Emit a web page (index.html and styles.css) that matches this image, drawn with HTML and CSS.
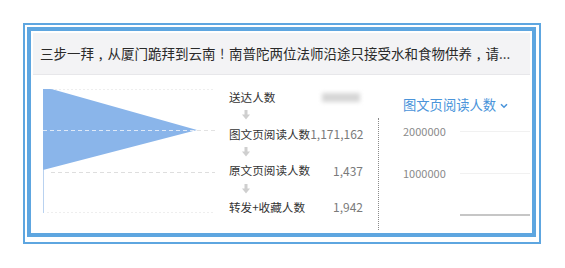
FILE: index.html
```html
<!DOCTYPE html>
<html lang="zh">
<head>
<meta charset="utf-8">
<link rel="stylesheet" href="styles.css">
</head>
<body>
<div class="page">
  <div class="outer">
    <div class="inner">
      <div class="header">三步一拜<span class="p">,</span>从厦门跪拜到云南<span class="p">!</span>南普陀两位法师沿途只接受水和食物供养<span class="p">,</span>请...</div>
      <div class="body">
        <svg class="funnel" width="172" height="156" viewBox="0 0 172 156">
          <line x1="0" y1="14.5" x2="172" y2="14.5" stroke="#eeeeee" stroke-width="1" stroke-dasharray="2 2"/>
          <path d="M0 14 L7 14 Q9 14 12 15 L154 55 L0 95 Z" fill="#8ab5ea"/>
          <line x1="0" y1="55.5" x2="154" y2="55.5" stroke="#dfe9f7" stroke-width="1" stroke-dasharray="4 3"/>
          <line x1="154" y1="55.5" x2="172" y2="55.5" stroke="#e2e2e2" stroke-width="1" stroke-dasharray="4 3"/>
          <line x1="8" y1="97.5" x2="172" y2="97.5" stroke="#dedede" stroke-width="1" stroke-dasharray="4 3"/>
          <line x1="0.5" y1="95" x2="0.5" y2="138" stroke="#b9d2f0" stroke-width="1"/>
          <line x1="4" y1="137.5" x2="172" y2="137.5" stroke="#eeeeee" stroke-width="1" stroke-dasharray="2 2"/>
        </svg>
        <div class="steps">
          <div class="step"><span class="name">送达人数</span><span class="blur"></span></div>
          <div class="arrow"><svg width="8" height="10" viewBox="0 0 8 10"><rect x="2.5" y="0" width="3" height="5" fill="#cfcfcf"/><path d="M0 4.5 L8 4.5 L4 9.5 Z" fill="#cfcfcf"/></svg></div>
          <div class="step"><span class="name">图文页阅读人数</span><span class="num">1,171,162</span></div>
          <div class="arrow"><svg width="8" height="10" viewBox="0 0 8 10"><rect x="2.5" y="0" width="3" height="5" fill="#cfcfcf"/><path d="M0 4.5 L8 4.5 L4 9.5 Z" fill="#cfcfcf"/></svg></div>
          <div class="step"><span class="name">原文页阅读人数</span><span class="num">1,437</span></div>
          <div class="arrow"><svg width="8" height="10" viewBox="0 0 8 10"><rect x="2.5" y="0" width="3" height="5" fill="#cfcfcf"/><path d="M0 4.5 L8 4.5 L4 9.5 Z" fill="#cfcfcf"/></svg></div>
          <div class="step"><span class="name">转发+收藏人数</span><span class="num">1,942</span></div>
        </div>
        <div class="divider"></div>
        <div class="chart">
          <div class="title">图文页阅读人数 <svg class="chev" width="8" height="6" viewBox="0 0 8 6"><path d="M1 1.2 L4 4.2 L7 1.2" fill="none" stroke="#4a94da" stroke-width="1.6"/></svg></div>
          <div class="row"><span class="tick">2000000</span><span class="grid"></span></div>
          <div class="row"><span class="tick">1000000</span><span class="grid"></span></div>
          <div class="row"><span class="tick"></span><span class="axis"></span></div>
        </div>
      </div>
    </div>
  </div>
</div>
</body>
</html>
```

FILE: styles.css
```css
* { box-sizing: border-box; }
html, body { margin: 0; padding: 0; background: #ffffff; }
body {
  font-family: "Noto Sans CJK SC", "Noto Sans", sans-serif;
  color: #333333;
}
.page { padding: 23px 0 0 23px; }
.outer {
  width: 518px;
  height: 221px;
  border: 2px solid #5ea6e0;
  padding: 2px 3px 5px 2px;
}
.inner {
  width: 509px;
  height: 210px;
  border: 4px solid #5ea6e0;
  padding: 2px;
  background: #ffffff;
}
.header {
  height: 42px;
  line-height: 41px;
  background: #f3f3f5;
  border-bottom: 1px solid #e7e7ea;
  padding-left: 7px;
  font-size: 13.5px;
  color: #2a2a2a;
  white-space: nowrap;
  overflow: hidden;
}
.p {
  display: inline-block;
  width: 1em;
  text-align: center;
}
.body {
  display: flex;
  height: 156px;
}
.funnel { margin-left: 10px; flex: none; display: block; }
.steps {
  margin-left: 14px;
  width: 134px;
  padding-top: 13px;
  font-size: 11.6px;
  flex: none;
}
.step {
  height: 18.3px;
  display: flex;
  align-items: center;
  justify-content: space-between;
  white-space: nowrap;
}
.name { color: #333333; }
.num { color: #7a7a7a; font-size: 12px; }
.blur {
  width: 38px;
  height: 9px;
  margin-right: 3px;
  background: #d6d6d6;
  filter: blur(2px);
}
.arrow {
  height: 18.3px;
  display: flex;
  align-items: center;
  padding-left: 13px;
}
.arrow svg { display: block; }
.divider {
  margin-left: 15px;
  margin-top: 43px;
  height: 112px;
  width: 0;
  border-left: 1px dotted #8a8a8a;
  flex: none;
}
.chart {
  margin-left: 24px;
  flex: 1;
  padding-top: 20px;
  display: flex;
  flex-direction: column;
}
.title {
  height: 20px;
  line-height: 20px;
  font-size: 13.3px;
  color: #4a94da;
  display: flex;
  align-items: center;
  white-space: nowrap;
}
.chev { margin-left: 4px; margin-top: 2px; }
.row {
  height: 20px;
  margin-top: 22px;
  display: flex;
  align-items: center;
}
.title + .row { margin-top: 6px; }
.tick {
  width: 57px;
  font-size: 11px;
  color: #8a8a8a;
  flex: none;
}
.grid { flex: 1; height: 1px; background: #f1f1f1; }
.axis { flex: 1; height: 2px; background: #c6c6c6; }
```
